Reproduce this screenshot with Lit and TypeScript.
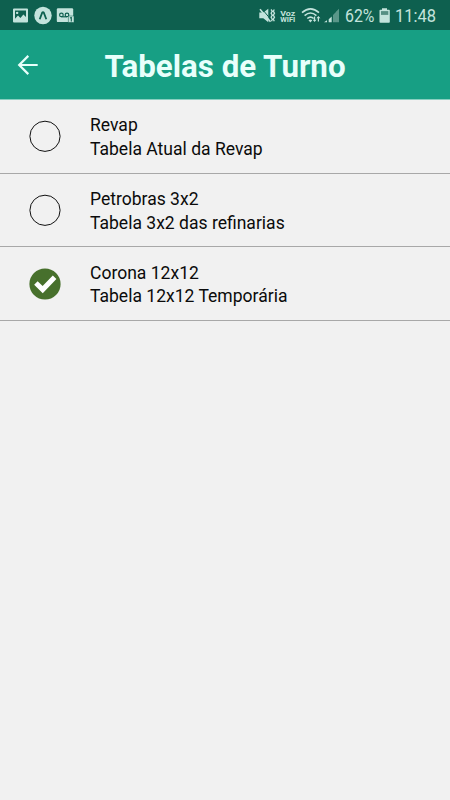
import { LitElement, html, css, svg } from "lit";
import { customElement, property, state } from "lit/decorators.js";

interface Shift {
  name: string;
  description: string;
}

@customElement("status-bar")
class StatusBar extends LitElement {
  static styles = css`
    :host {
      display: flex;
      justify-content: space-between;
      height: 30px;
      background: #0e604f;
      color: #c3e3dc;
    }
    svg { display: block; fill: currentColor; overflow: visible; }
    .info { display: flex; padding-right: 14px; }
    .percent { width: 34px; }
    .clock { width: 41px; }
    text { font-family: Roboto, sans-serif; }
  `;

  render() {
    return html`
      <svg width="80" height="30" viewBox="0 0 80 30">
        <path fill-rule="evenodd" d="M14 8.5h13q1 0 1 1v12q0 1-1 1H14q-1 0-1-1v-12q0-1 1-1zM15 10.5v8.2l3-3.2 2.4 2.4 3-3.5 2.6 2.7v-6.6zM17.2 11.7a1.2 1.2 0 1 1-.1 0z"/>
        <circle cx="43" cy="15.5" r="8.7"/>
        <path d="M39.7 19.3L42.2 12.6Q43 11.5 43.8 12.6L46.3 19.3" fill="none" stroke="#0e604f" stroke-width="1.8"/>
        <path d="M58 8.3h14q1.2 0 1.2 1.2v11.4q0 1.2-1.2 1.2H58q-1.2 0-1.2-1.2V9.5q0-1.2 1.2-1.2z"/>
        <g fill="none" stroke="#0e604f" stroke-width="1.2">
          <circle cx="61.4" cy="14.9" r="1.8"/><circle cx="67" cy="14.9" r="1.8"/><path d="M61.4 16.8h5.600"/>
        </g>
        <rect x="68.200" y="16" width="5.800" height="6.400" stroke="#0e604f" stroke-width=".5"/>
        <path d="M70 18l1.3-.5v4" fill="none" stroke="#0e604f" stroke-width="1.1"/>
      </svg>
      <div class="info">
        <svg width="87" height="30" viewBox="258 0 87 30">
          <path d="M259.3 12.4h4l5-3.600v13.400l-5-3.900h-4z"/>
          <path d="M261.500 8.300L271.500 20.300" fill="none" stroke="#0e604f" stroke-width="1"/>
          <path d="M260 9.200L270.500 21.700" fill="none" stroke="currentColor" stroke-width="1.600"/>
          <path d="M271 9.500l1.300 1.700-1.200 2 1.200 2-1.200 2 1.200 2-.8 2M274.300 9.500l-1 1.700 1.200 2-1.200 2 1.200 2-1.200 2 1 2" fill="none" stroke="currentColor" stroke-width="1.300"/>
          <text x="280.3" y="15.5" font-size="7.8" font-weight="700" textLength="15" lengthAdjust="spacingAndGlyphs">Voz</text>
          <text x="280.3" y="22.2" font-size="7" font-weight="700" textLength="15" lengthAdjust="spacingAndGlyphs">WIFI</text>
          <g fill="none" stroke="currentColor" stroke-width="1.6">
            <path d="M302 12.7q8.500-7.600 17 0M304.600 15.600q5.900-5.200 11.800 0M307.300 18.500q3.200-2.800 6.400 0"/>
          </g>
          <path d="M308.500 20.300q1.900-1.600 3.800 0l-1.900 2.200z"/>
          <path d="M314 16.500h1.200v3.200h1.300l-1.900 2.300-1.900-2.300h1.300zM317.800 21.500h1.200v-3.200h1.400l-2-2.300-2 2.300h1.400z"/>
          <path d="M324 22.200l3-2v2zM328.700 19.300l3-2.800v5.700h-3z"/>
          <path opacity=".42" d="M333 14.900l2.700-2.700v10H333zM335.700 12.100l3.300-3.300v13.400h-3.300z"/>
        </svg>
        <svg class="percent" height="30"><text x="0" y="22.3" font-size="18" textLength="29.5" lengthAdjust="spacingAndGlyphs">62%</text></svg>
        <svg width="16" height="30" viewBox="379 0 16 30">
          <path d="M382 8.300h5v1.500h2q.8 0 .8.800v11.300q0 .8-.8.800h-8.700q-.8 0-.8-.8V10.600q0-.8.8-.8h1.700z"/>
          <path d="M381 11.100h7.300v3.800H381z" fill="#568f83"/>
        </svg>
        <svg class="clock" height="30"><text x="0" y="22.3" font-size="18" textLength="41" lengthAdjust="spacingAndGlyphs">11:48</text></svg>
      </div>
    `;
  }
}

@customElement("shift-row")
class ShiftRow extends LitElement {
  @property({ attribute: false }) shift!: Shift;
  @property({ type: Boolean }) checked = false;

  static styles = css`
    :host {
      display: flex;
      align-items: center;
      box-sizing: border-box;
      height: 73.7px;
      padding-left: 29px;
      gap: 29px;
      border-bottom: 1px solid #a8a8a8;
      font: 400 17.55px/23.8px Roboto, sans-serif;
      color: #0b0b0b;
      cursor: pointer;
    }
    svg { display: block; width: 32px; height: 32px; flex: none; }
    .ring { fill: none; stroke: #111; stroke-width: 1; }
    .disc { fill: #47702c; }
    .tick { fill: none; stroke: #fff; stroke-width: 5; }
    .copy { padding-top: 3.5px; white-space: nowrap; }
  `;

  render() {
    return html`
      <svg viewBox="0 0 32 32">
        ${this.checked
          ? svg`<circle class="disc" cx="16" cy="16" r="15.6"/><path class="tick" d="M6.900 15L13.700 21.600 25.600 9.300"/>`
          : svg`<circle class="ring" cx="16" cy="16.3" r="15.1"/>`}
      </svg>
      <div class="copy">
        <div>${this.shift.name}</div>
        <div>${this.shift.description}</div>
      </div>
    `;
  }
}

@customElement("app-root")
class AppRoot extends LitElement {
  @state() private selected = 2;

  private shifts: Shift[] = [
    { name: "Revap", description: "Tabela Atual da Revap" },
    { name: "Petrobras 3x2", description: "Tabela 3x2 das refinarias" },
    { name: "Corona 12x12", description: "Tabela 12x12 Temporária" },
  ];

  static styles = css`
    :host {
      display: flex;
      flex-direction: column;
      height: 100vh;
      overflow: hidden;
      background: #f1f1f1;
    }
    .header {
      display: grid;
      grid-template-columns: 55px 1fr 55px;
      align-items: center;
      box-sizing: border-box;
      height: 70px;
      background: #179f84;
      border-bottom: 1px solid #88cfc0;
      color: #e8fffb;
    }
    .back { margin-left: 17px; }
    .title {
      margin: 0;
      padding-top: 4px;
      text-align: center;
      white-space: nowrap;
      font: 700 31.3px/36px Roboto, sans-serif;
    }
  `;

  render() {
    return html`
      <status-bar></status-bar>
      <header class="header">
        <svg class="back" width="22" height="22" viewBox="0 0 22 22" fill="none" stroke="currentColor" stroke-width="2.2">
          <path d="M20.7 11H2.5M11.3 1.9L2.2 11l9.1 9.1"/>
        </svg>
        <h1 class="title">Tabelas de Turno</h1>
      </header>
      <main>
        ${this.shifts.map(
          (shift, i) => html`<shift-row
            .shift=${shift}
            ?checked=${i === this.selected}
            @click=${() => (this.selected = i)}
          ></shift-row>`
        )}
      </main>
    `;
  }
}
